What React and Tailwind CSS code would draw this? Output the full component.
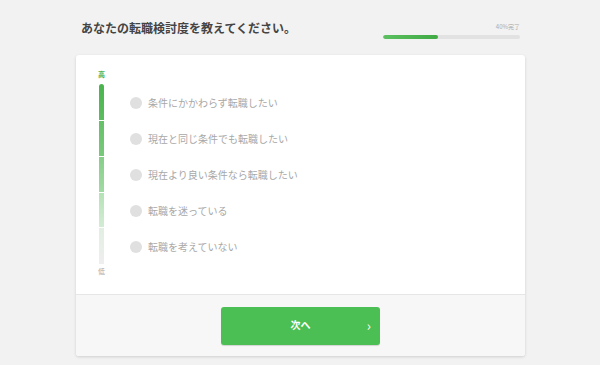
// 転職検討度の質問画面
const jp = { fontFamily: '"Noto Sans CJK JP", "Noto Sans", sans-serif' };

const choix = [
  '条件にかかわらず転職したい',
  '現在と同じ条件でも転職したい',
  '現在より良い条件なら転職したい',
  '転職を迷っている',
  '転職を考えていない',
];

const segments = [
  'bg-gradient-to-b from-[#4ab44e] to-[#5cbd5f] rounded-t-full h-[36px]',
  'bg-gradient-to-b from-[#66c168] to-[#79c97b] h-[35px]',
  'bg-gradient-to-b from-[#86cf88] to-[#a2daa3] h-[35px]',
  'bg-gradient-to-b from-[#b5e2b6] to-[#d3ecd4] h-[34px]',
  'bg-gradient-to-b from-[#e2efe2] to-[#eeeeee] h-[36px]',
];

export default function App() {
  return (
    <div className="w-[600px] h-[365px] bg-[#f2f2f2] overflow-hidden" style={jp}>
      <div className="flex items-end justify-between pl-[81px] pr-[80px] pt-[19px] h-[55px] pb-[16px]">
        <h1 className="text-[12px] font-bold text-[#444] leading-none mb-[5px]">
          あなたの転職検討度を教えてください。
        </h1>
        <div className="w-[137px] flex flex-col items-end">
          <span className="text-[6px] text-[#aaa] leading-none mb-[5px]">40%完了</span>
          <div className="w-full h-[4px] rounded-full bg-[#e2e2e2] overflow-hidden">
            <div className="h-full w-[40%] rounded-full bg-gradient-to-r from-[#5cc060] to-[#3faa44]" />
          </div>
        </div>
      </div>

      <div className="mx-[76px] w-[449px] bg-white rounded-[3px] shadow-[0_1px_3px_rgba(0,0,0,0.15)] overflow-hidden">
        <div className="flex h-[240px] border-b border-[#e6e6e6]">
          <div className="w-[54px] flex flex-col items-center pt-[16px]">
            <span className="text-[7px] leading-none text-[#4cb34f] font-bold -ml-[3px]">高</span>
            <div className="flex flex-col gap-[1px] w-[5px] mt-[6px] -ml-[3px]">
              {segments.map((s, i) => (
                <div key={i} className={`w-full ${s}`} />
              ))}
            </div>
            <span className="text-[7px] leading-none text-[#aaa] mt-[4px] -ml-[3px]">低</span>
          </div>
          <div className="flex flex-col pt-[41px] gap-[22px]">
            {choix.map((c) => (
              <label key={c} className="flex items-center gap-[6px] h-[14px]">
                <span className="w-[12px] h-[12px] rounded-full bg-[#e0e0e0]" />
                <span className="text-[10px] text-[#a8a8a8] leading-none">{c}</span>
              </label>
            ))}
          </div>
        </div>
        <div className="bg-[#f7f7f7] h-[61px] flex items-center justify-center">
          <button className="relative w-[159px] h-[38px] rounded-[3px] bg-[#4bbf53] text-white text-[10px] font-bold flex items-center justify-center shadow-[0_1px_1px_rgba(0,0,0,0.15)]">
            <span className="-mt-[2px]">次へ</span>
            <span className="absolute right-[9px] top-[11px] text-[14px] font-normal leading-none">›</span>
          </button>
        </div>
      </div>
    </div>
  );
}
